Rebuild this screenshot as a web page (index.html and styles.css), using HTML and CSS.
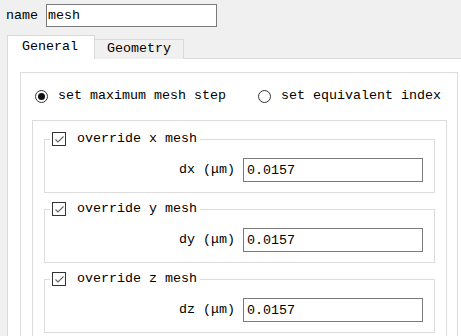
FILE: index.html
```html
<!DOCTYPE html>
<html lang="en">
<head>
    <meta charset="UTF-8">
    <title>mesh</title>
    <link rel="stylesheet" href="styles.css">
</head>
<body>

<div class="name-row">
    <label for="name">name</label>
    <input type="text" id="name" class="name-input" value="mesh">
</div>

<!-- Tabbladen -->
<div class="tabs">
    <div class="tab active">General</div>
    <div class="tab">Geometry</div>
</div>

<div class="pane">
    <div class="group outer">
        <div class="radio-row">
            <label class="radio-item"><span class="radio checked"></span>set maximum mesh step</label>
            <label class="radio-item"><span class="radio"></span>set equivalent index</label>
        </div>

        <div class="group inner">
            <fieldset class="axis">
                <legend><span class="check"><svg width="11" height="11" viewBox="0 0 11 11"><polyline points="1.5,5.5 4,8 9.5,2.5" fill="none" stroke="#666" stroke-width="1.1"/></svg></span>override x mesh</legend>
                <div class="field-row">
                    <span class="field-label">dx (μm)</span>
                    <input type="text" class="value" value="0.0157">
                </div>
            </fieldset>

            <fieldset class="axis">
                <legend><span class="check"><svg width="11" height="11" viewBox="0 0 11 11"><polyline points="1.5,5.5 4,8 9.5,2.5" fill="none" stroke="#666" stroke-width="1.1"/></svg></span>override y mesh</legend>
                <div class="field-row">
                    <span class="field-label">dy (μm)</span>
                    <input type="text" class="value" value="0.0157">
                </div>
            </fieldset>

            <fieldset class="axis">
                <legend><span class="check"><svg width="11" height="11" viewBox="0 0 11 11"><polyline points="1.5,5.5 4,8 9.5,2.5" fill="none" stroke="#666" stroke-width="1.1"/></svg></span>override z mesh</legend>
                <div class="field-row">
                    <span class="field-label">dz (μm)</span>
                    <input type="text" class="value" value="0.0157">
                </div>
            </fieldset>
        </div>
    </div>
</div>

</body>
</html>
```

FILE: styles.css
```css
body {
    margin: 0;
    height: 336px;
    background-color: #f0f0f0;
    font-family: "Liberation Mono", "DejaVu Sans Mono", monospace;
    font-size: 13.33px;
    line-height: 16px;
    color: #000;
    overflow: hidden;
}

input {
    font-family: inherit;
    font-size: inherit;
    color: #000;
    box-sizing: border-box;
    border: 1px solid #7a7a7a;
    background: #fff;
    margin: 0;
    outline: none;
}

.name-row {
    display: flex;
    align-items: center;
    gap: 8px;
    padding: 4px 0 0 6px;
}
.name-input {
    width: 171px;
    height: 23px;
    padding: 0 1px;
}

/* Tabbladen */
.tabs {
    display: flex;
    align-items: flex-end;
    margin: 8px 0 -1px 7px;
    position: relative;
    z-index: 1;
}
.tab {
    border: 1px solid #d9d9d9;
    border-bottom: none;
    border-left: none;
    background: #f0f0f0;
    padding: 1px 12px 2px 12px;
}
.tab.active {
    background: #fff;
    border-left: 1px solid #d9d9d9;
    padding: 3px 16px 4px 14px;
}

/* Panelen lopen door tot onder de rand van het venster */
.pane {
    box-sizing: border-box;
    width: 464px;
    height: 279px;
    margin-left: 7px;
    background: #fff;
    border: 1px solid #d9d9d9;
    border-bottom: none;
    padding: 13px 12px 0 12px;
}

.group {
    box-sizing: border-box;
    border: 1px solid #dcdcdc;
    border-bottom: none;
}
.outer {
    padding: 15px 10px 0 11px;
    height: 265px;
}
.radio-row {
    display: flex;
    gap: 32px;
    padding-left: 3px;
}
.radio-item {
    display: flex;
    align-items: center;
    gap: 10px;
}
.radio {
    box-sizing: border-box;
    width: 13px;
    height: 13px;
    border: 1px solid #333;
    border-radius: 50%;
    background: #fff;
    display: flex;
    align-items: center;
    justify-content: center;
}
.radio.checked::after {
    content: "";
    width: 7px;
    height: 7px;
    border-radius: 50%;
    background: #111;
}

.inner {
    margin-top: 16px;
    padding: 10px 11px 0 11px;
    height: 217px;
}

.axis {
    margin: 0 0 8px 0;
    padding: 11px 11px 10px 11px;
    border: 1px solid #dcdcdc;
    min-width: 0;
}
.axis:last-child {
    margin-bottom: 0;
}
.axis legend {
    display: flex;
    align-items: center;
    gap: 11px;
    margin-left: -6px;
    padding: 0 3px 0 2px;
    height: 16px;
}
.check {
    box-sizing: border-box;
    width: 14px;
    height: 14px;
    border: 1px solid #333;
    background: #fff;
    display: flex;
    align-items: center;
    justify-content: center;
}

.field-row {
    display: flex;
    justify-content: flex-end;
    align-items: center;
    gap: 8px;
}
.value {
    width: 180px;
    height: 24px;
    padding: 0 3px;
}
```
